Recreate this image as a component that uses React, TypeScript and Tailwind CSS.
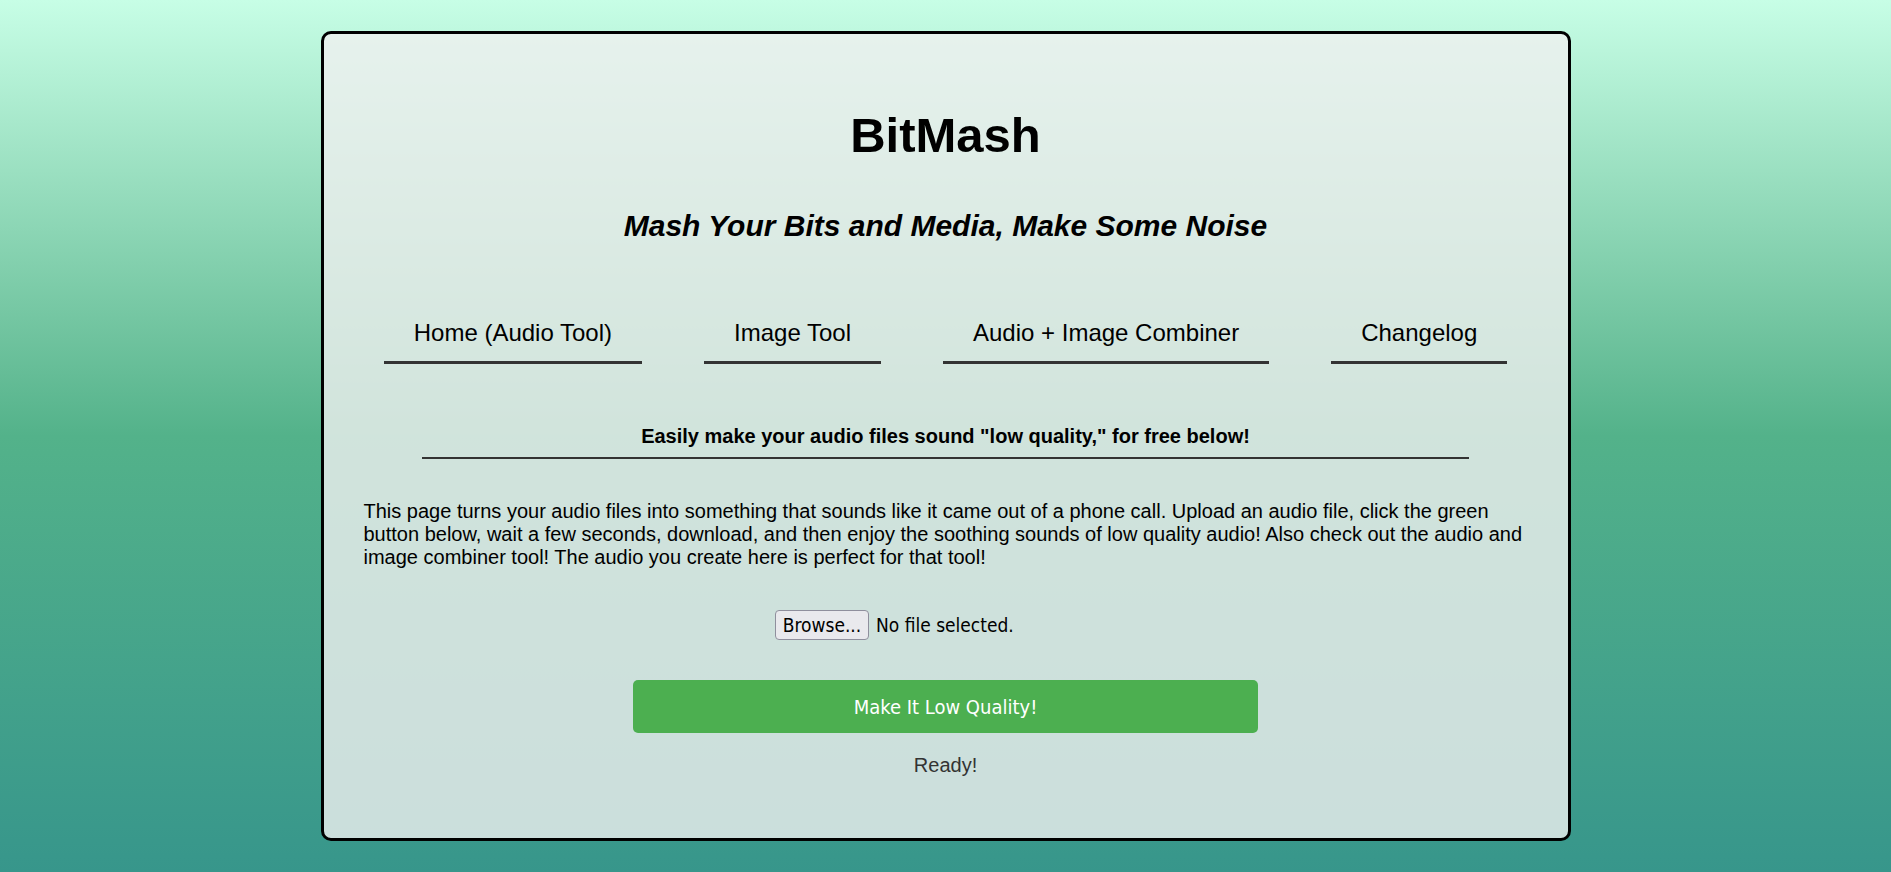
const navLinks = [
  { label: "Home (Audio Tool)" },
  { label: "Image Tool" },
  { label: "Audio + Image Combiner" },
  { label: "Changelog" },
];

const uiFont = { fontFamily: '"DejaVu Sans Condensed", "DejaVu Sans", sans-serif' };

export default function App() {
  return (
    <main className="min-h-screen bg-gradient-to-b from-[#c7fee6] via-[#53b28a] to-[#37968b] pt-[31px] pb-[31px] font-['Liberation_Sans',Arial,sans-serif] text-black">
      <div className="mx-auto w-[1250px] rounded-[10px] border-[3px] border-black bg-[#f0f0f0]/80 px-[40px] pt-[74px] pb-[61px]">
        <h1 className="text-center text-[49px] leading-[55px] font-bold">
          BitMash
        </h1>

        <h2 className="mt-[46px] text-center text-[30px] leading-[34px] font-bold italic">
          Mash Your Bits and Media, Make Some Noise
        </h2>

        <nav className="mt-[62px] flex justify-center gap-[62px]">
          {navLinks.map((link) => (
            <a
              key={link.label}
              href="#"
              className="border-b-[3px] border-[#333] px-[30px] pt-[14px] pb-[14px] text-[24px] leading-[28px] text-black"
            >
              {link.label}
            </a>
          ))}
        </nav>

        <p className="mx-auto mt-[61px] w-[90%] border-b-2 border-[#333] pb-[9px] text-center text-[20px] leading-[23px] font-bold">
          Easily make your audio files sound "low quality," for free below!
        </p>

        <p className="mt-[41px] text-[20px] leading-[23px]">
          This page turns your audio files into something that sounds like it came
          out of a phone call. Upload an audio file, click the green button below,
          wait a few seconds, download, and then enjoy the soothing sounds of low
          quality audio! Also check out the audio and image combiner tool! The
          audio you create here is perfect for that tool!
        </p>

        <div className="mx-auto mt-[41px] flex w-[341px] items-center gap-[7px]" style={uiFont}>
          <button className="h-[30px] w-[94px] rounded-[4px] border border-[#8f8f9d] bg-[#e9e9ed] text-[19px] leading-none text-black">
            Browse...
          </button>
          <span className="text-[19px] leading-none text-black">No file selected.</span>
        </div>

        <button
          className="mx-auto mt-[40px] block h-[53px] w-[625px] rounded-[5px] bg-[#4caf50] text-[20px] text-white"
          style={uiFont}
        >
          Make It Low Quality!
        </button>

        <p className="mt-[21px] text-center text-[20px] leading-[23px] text-[#333]">
          Ready!
        </p>
      </div>
    </main>
  );
}
